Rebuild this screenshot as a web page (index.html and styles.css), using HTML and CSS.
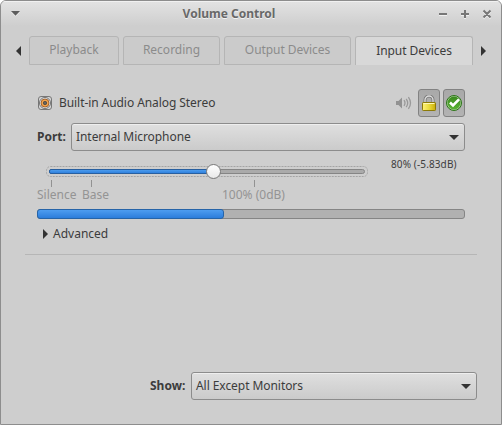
FILE: index.html
```html
<!DOCTYPE html>
<html lang="en">
<head>
<meta charset="utf-8">
<title>Volume Control</title>
<link rel="stylesheet" href="styles.css">
</head>
<body>
<div class="window">
  <header class="titlebar">
    <svg class="menu" width="9" height="6" viewBox="0 0 9 6"><path d="M0 1h9L4.5 5.5z" fill="#f0f0f0"/><path d="M0 0h9L4.5 4.8z" fill="#5d5d5d"/></svg>
    <h1>Volume Control</h1>
    <svg class="controls" width="54" height="12" viewBox="0 0 54 12" fill="none" stroke-width="2">
      <path stroke="#f0f0f0" d="M1 7h8M23 7h8M27 3v8M45.5 3.5l7 7M52.5 3.5l-7 7"/>
      <path stroke="#777" d="M1 6h8M23 6h8M27 2v8M45.5 2.5l7 7M52.5 2.5l-7 7"/>
    </svg>
  </header>
  <nav class="tabs">
    <svg class="prev" width="5" height="10" viewBox="0 0 5 10"><path d="M5 0v10L0 5z" fill="#333"/></svg>
    <button class="tab playback">Playback</button>
    <button class="tab recording">Recording</button>
    <button class="tab output">Output Devices</button>
    <button class="tab input active">Input Devices</button>
    <svg class="next" width="5" height="10" viewBox="0 0 5 10"><path d="M0 0v10L5 5z" fill="#333"/></svg>
  </nav>
  <main class="device">
    <div class="device-head">
      <svg class="speaker" width="14" height="14" viewBox="0 0 14 14">
        <rect x=".5" y=".5" width="13" height="13" rx="2.5" fill="#d5d5d5" stroke="#777"/>
        <circle cx="7" cy="7" r="5.5" fill="#eee" stroke="#555" stroke-width=".8"/>
        <circle cx="7" cy="7" r="4" fill="#f3a34c" stroke="#9d5a25" stroke-width=".9"/>
        <circle cx="7" cy="7" r="2" fill="#444"/><circle cx="7" cy="7" r=".8" fill="#888"/>
      </svg>
      <span class="name">Built-in Audio Analog Stereo</span>
      <svg class="mute" width="16" height="14" viewBox="0 0 16 14"><path d="M0 5h2.5L6 1.5v11L2.5 9H0z" fill="#929292"/><path d="M8 4.2q2 2.8 0 5.6M10.2 2.8q3 4.2 0 8.4M12.4 1.2q4.2 5.8 0 11.6" fill="none" stroke="#999" stroke-width="1.3"/></svg>
      <button class="toggle lock">
        <svg width="14" height="17" viewBox="0 0 14 17">
          <defs><linearGradient id="gold"><stop stop-color="#fff27c"/><stop offset=".5" stop-color="#eadb3b"/><stop offset="1" stop-color="#c9ad0c"/></linearGradient></defs>
          <path d="M3 9V5a4 4 0 0 1 8 0v4" fill="none" stroke="#777" stroke-width="3"/><path d="M3 9V5a4 4 0 0 1 8 0v4" fill="none" stroke="#ddd" stroke-width="1.3"/>
          <rect x=".5" y="7.5" width="13" height="8" rx=".7" fill="url(#gold)" stroke="#8c7a08"/><path d="M1.5 8.5h11" stroke="#fff9b5"/>
        </svg>
      </button>
      <button class="toggle default">
        <svg width="16" height="16" viewBox="0 0 16 16">
          <defs><linearGradient id="green" x2="0" y2="1"><stop stop-color="#3b8a20"/><stop offset="1" stop-color="#59b332"/></linearGradient></defs>
          <circle cx="8" cy="8" r="7.5" fill="#a9cf99" stroke="#2c7418"/><circle cx="8" cy="8" r="6.4" fill="url(#green)"/>
          <path d="M4 7.5l3 3 6-6.2" fill="none" stroke="#fff" stroke-width="2.6"/>
        </svg>
      </button>
    </div>
    <div class="port">
      <label>Port:</label>
      <button class="combo"><span>Internal Microphone</span><svg width="10" height="5" viewBox="0 0 10 5"><path d="M0 0h10L5 5z" fill="#333"/></svg></button>
    </div>
    <div class="volume">
      <svg class="scale" width="322" height="24" viewBox="0 0 322 24">
        <defs>
          <linearGradient id="blue" x2="0" y2="1"><stop stop-color="#51a0f0"/><stop offset="1" stop-color="#2b7ddb"/></linearGradient>
          <linearGradient id="knob" x2="0" y2="1"><stop stop-color="#fff"/><stop offset="1" stop-color="#e8e8e8"/></linearGradient>
        </defs>
        <rect x=".5" y="3.5" width="321" height="10" rx="4" fill="none" stroke="#a4a4a4" stroke-dasharray="2 1"/>
        <rect x="3.5" y="6.5" width="315" height="4" rx="2" fill="#aaa" stroke="#858585"/>
        <rect x="3.5" y="6.5" width="160" height="4" rx="1.5" fill="url(#blue)" stroke="#285f9f"/>
        <circle cx="167.5" cy="8.5" r="7" fill="url(#knob)" stroke="#777"/>
        <path d="M5.5 17v7M45.5 17v7M208.5 17v7" stroke="#929292"/>
      </svg>
      <span class="value">80% (-5.83dB)</span>
    </div>
    <div class="marks"><span class="silence">Silence</span><span class="base">Base</span><span class="full">100% (0dB)</span></div>
    <div class="meter"><div class="level"></div></div>
    <div class="advanced"><svg width="5" height="10" viewBox="0 0 5 10"><path d="M0 0v10L5 5z" fill="#333"/></svg><span>Advanced</span></div>
  </main>
  <hr>
  <footer class="show">
    <label>Show:</label>
    <button class="combo"><span>All Except Monitors</span><svg width="10" height="5" viewBox="0 0 10 5"><path d="M0 0h10L5 5z" fill="#333"/></svg></button>
  </footer>
</div>
</body>
</html>
```
FILE: styles.css
```css
* { box-sizing: border-box; }
body { margin: 0; background: #fff; color: #3c3c3c; font: 12px/18px "Noto Sans", sans-serif; }
svg { display: block; flex: none; }
button { font: inherit; color: inherit; margin: 0; padding: 0; }
label { font-weight: 700; }
span, label, .tab, h1 { white-space: nowrap; }
.window { width: 502px; height: 425px; border: 1px solid #8d8d8d; border-radius: 6px 6px 0 0; background: #cecece; display: flex; flex-direction: column; overflow: hidden; }
.titlebar { height: 25px; flex: none; display: grid; grid-template-columns: 9px 1fr 54px; align-items: center; padding: 0 9px 0 10px; background: linear-gradient(#e3e3e3, #cecece); box-shadow: inset 0 1px #f1f1f1; }
.titlebar h1 { margin: 0; font-size: 12px; line-height: 18px; text-align: center; color: #686868; text-shadow: 0 1px #f2f2f2; }
.tabs { display: flex; flex: none; height: 29px; margin-top: 10px; padding-left: 15px; align-items: center; }
.tab { height: 29px; margin-right: 4px; padding-bottom: 2px; border: 1px solid #b5b5b5; border-radius: 3px 3px 0 0; background: #cbcbcb; color: #8b8b8b; }
.prev { margin-right: 8px; }
.playback { width: 90px; }
.recording { width: 97px; }
.output { width: 127px; letter-spacing: -0.06px; }
.input { width: 118px; letter-spacing: -0.06px; }
.active { border-bottom: 0; padding-bottom: 0; background: #d8d8d8; color: #3c3c3c; }
.next { margin-left: 4px; }
.device { margin: 24px 36px 0; display: flex; flex-direction: column; }
.device-head { height: 28px; display: flex; align-items: center; padding-left: 1px; }
.name { margin-left: 7px; flex: 1; letter-spacing: -0.07px; }
.mute { margin-right: 6px; }
.toggle { width: 22px; height: 28px; display: grid; place-items: center; border: 1px solid #828282; border-radius: 3px; background: linear-gradient(#a9a9a9, #b3b3b3); }
.default { margin-left: 3px; }
.port { height: 28px; margin-top: 6px; display: flex; align-items: center; }
.port label { width: 34px; }
.combo { flex: 1; height: 28px; display: flex; align-items: center; justify-content: space-between; padding: 0 5px 0 4px; border: 1px solid #8c8c8c; border-radius: 3px; background: linear-gradient(#dfdfdf, #cbcbcb); box-shadow: inset 0 1px #eee; letter-spacing: -0.06px; }
.volume { display: flex; margin-top: 12px; height: 24px; padding-left: 9px; }
.value { margin-left: 23px; font-size: 10px; line-height: 14px; margin-top: -6px; letter-spacing: 0.12px; }
.marks { height: 16px; line-height: 16px; display: grid; grid-template-columns: 45px 140px 1fr; color: #949494; }
.meter { height: 10px; margin-top: 6px; border: 1px solid #858585; border-radius: 3px; background: #b1b1b1; }
.level { width: 187px; height: 10px; margin: -1px; border: 1px solid #2664a8; border-radius: 3px; background: linear-gradient(#4e9df0, #2c7ddb); }
.advanced { height: 18px; margin-top: 6px; padding-left: 6px; display: flex; align-items: center; gap: 5px; }
hr { width: 452px; flex: none; height: 1px; margin: 11px 24px 0; border: 0; background: #b6b6b6; }
.show { height: 28px; margin: 117px 24px 0 149px; display: flex; align-items: center; }
.show label { width: 41px; }
```
